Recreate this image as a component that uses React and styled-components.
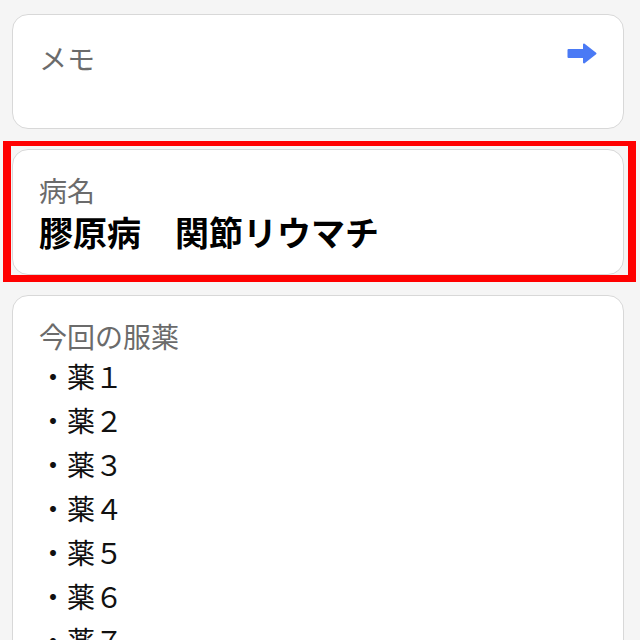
import React from 'react';
import styled, { createGlobalStyle } from 'styled-components';

const GlobalStyle = createGlobalStyle`
  html, body {
    margin: 0;
    padding: 0;
    background: #f5f5f5;
  }
  body {
    font-family: "Noto Sans CJK JP", "Noto Sans", sans-serif;
  }
`;

const Page = styled.div`
  display: flex;
  flex-direction: column;
  gap: 20px;
  padding: 14px 16px 14px 12px;
  min-height: 640px;
  box-sizing: border-box;
`;

const Card = styled.section`
  box-sizing: border-box;
  background: #fff;
  border: 1px solid #d8d8d8;
  border-radius: 16px;
  padding: 22px 26px 18px;
  min-height: ${(p) => p.$minHeight || 'auto'};
`;

// red selection frame drawn around the focused card
const Highlight = styled.div`
  border-style: solid;
  border-color: #ff0000;
  border-width: 5px 8px 7px 8px;
  padding: 3px 4px 0 1px;
  margin: -8px -12px -7px -9px;
`;

const Header = styled.div`
  display: flex;
  justify-content: space-between;
  align-items: flex-start;
  padding-top: 3px;
`;

const Label = styled.div`
  font-size: 28px;
  line-height: 36px;
  color: #6b6b6b;
`;

const Value = styled.div`
  font-size: 34px;
  line-height: 48px;
  font-weight: 700;
  color: #000;
`;

const List = styled.ul`
  list-style: none;
  margin: 0;
  padding: 0;
`;

const Item = styled.li`
  font-size: 28px;
  line-height: 44px;
  color: #111;
`;

const ArrowIcon = styled.svg`
  width: 30px;
  height: 21px;
  margin-top: 3px;
  flex-shrink: 0;
`;

const medicines = ['薬１', '薬２', '薬３', '薬４', '薬５', '薬６', '薬７', '薬８'];

export default function App() {
  return (
    <>
      <GlobalStyle />
      <Page>
        <Card $minHeight="115px">
          <Header>
            <Label>メモ</Label>
            <ArrowIcon viewBox="0 0 30 21">
              <path
                d="M1.5 7 H17 V1.5 L28.5 10.5 L17 19.5 V14 H1.5 Z"
                fill="#4a7af5"
                stroke="#4a7af5"
                strokeWidth="2"
                strokeLinejoin="round"
              />
            </ArrowIcon>
          </Header>
        </Card>

        <Highlight>
          <Card>
            <Label>病名</Label>
            <Value>膠原病　関節リウマチ</Value>
          </Card>
        </Highlight>

        <Card>
          <Label>今回の服薬</Label>
          <List>
            {medicines.map((m) => (
              <Item key={m}>・{m}</Item>
            ))}
          </List>
        </Card>
      </Page>
    </>
  );
}
